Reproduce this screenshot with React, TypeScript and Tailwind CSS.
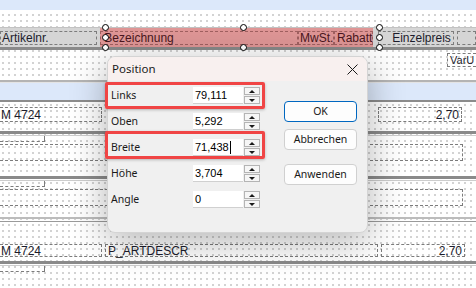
import React from 'react';

const dash = 'border border-dashed border-[#7c7c7c]';

function Spinner() {
  return (
    <div className="ml-px flex h-[17px] w-[16px] flex-col gap-px">
      {['M1 4 L4 1 L7 4 Z', 'M1 1 L4 4 L7 1 Z'].map((d) => (
        <div key={d} className="flex h-[8px] items-center justify-center border border-[#b4b4b4] bg-[#f6f6f6]">
          <svg width="8" height="5" viewBox="0 0 8 5">
            <path d={d} fill="#1a1a1a" />
          </svg>
        </div>
      ))}
    </div>
  );
}

function Field({ label, value, caret }: { label: string; value: string; caret?: boolean }) {
  return (
    <div className="flex h-[17px] items-center">
      <span className="w-[82px] text-[10.5px] text-[#1a1a1a]">{label}</span>
      <div className="flex h-[17px] w-[50px] items-center bg-white pl-[2px] font-['Liberation_Sans'] text-[11px] text-black border-b border-[#d0d0d0]">
        {value}
        {caret && <span className="ml-px inline-block h-[13px] w-[1.5px] bg-black" />}
      </div>
      <Spinner />
    </div>
  );
}

function Handle({ x, y }: { x: number; y: number }) {
  return (
    <div
      className="absolute h-[7px] w-[7px] rounded-full border border-black bg-white"
      style={{ left: x - 3.5, top: y - 3.5 }}
    />
  );
}

function Lines({ dark = 'bg-[#8a8a8a]', light = 'bg-[#cdcdcd]' }: { dark?: string; light?: string }) {
  return (
    <>
      <div className={`h-[3px] ${dark}`} />
      <div className="h-px" />
      <div className={`h-px ${light}`} />
    </>
  );
}

function Section({ after }: { after: number }) {
  return (
    <>
      <div className="h-[6px] w-[45px] border-r border-b border-dashed border-[#7c7c7c]" />
      <div className="h-[2px]" />
      <div className={`h-[17px] w-[463px] ${dash} border-l-0`} />
      <div style={{ height: after }} />
    </>
  );
}

export default function App() {
  return (
    <div className="relative h-[288px] w-[476px] overflow-hidden bg-white bg-[radial-gradient(circle_at_3px_3px,#a4a4a4_0.5px,transparent_0.9px)] bg-size-[6px_6px] font-['Liberation_Sans'] text-[12px] text-[#1c1c2c]">
      <div className="flex flex-col">
        <div className="h-[10px] bg-[#dce8fa]" />
        <div className="h-[17px]" />

        {/* header band */}
        <div className="flex h-[20px] items-center border-t border-[#c2c2c2] bg-[#d5d5d5]">
          <div className={`flex h-[14px] w-[102px] items-center pl-px ${dash}`}>Artikelnr.</div>
          <div className="ml-[3px] flex w-[273px] items-center self-stretch bg-[#df9696] text-[#4a1620]">
            <div className={`flex h-[14px] w-[198px] items-center pl-[3px] ${dash} border-[#a06060]`}>Bezeichnung</div>
            <div className={`flex h-[14px] w-[36px] items-center justify-end ${dash} border-[#a06060]`}>MwSt.</div>
            <div className={`flex h-[14px] w-[39px] items-center justify-end ${dash} border-[#a06060]`}>Rabatt</div>
          </div>
          <div className={`ml-[5px] flex h-[14px] w-[79px] items-center justify-end pr-[2px] ${dash}`}>Einzelpreis</div>
          <div className={`ml-[3px] h-[14px] w-[20px] ${dash}`} />
        </div>
        <div className="h-[3px] bg-[#8a8a8a]" />

        <div className="h-[30px] pl-[447px] pt-[3px]">
          <div className={`flex h-[14px] w-[29px] items-center pl-[2px] text-[11px] ${dash} border-r-0`}>VarU</div>
        </div>
        <div className="h-[2px] bg-[#b4b4b4]" />
        <div className="h-px bg-[#e4e4e4]" />
        <div className="h-[17px] bg-[#dce8fa]" />
        <div className="h-[2px] bg-[#8c8c8c]" />

        <div className="flex h-[26px] items-start pt-[5px]">
          <div className={`flex h-[15px] w-[102px] items-center pl-px ${dash} border-l-0`}>M 4724</div>
          <div className={`ml-[276px] flex h-[15px] w-[84px] items-center justify-end pr-[2px] ${dash}`}>2,70</div>
        </div>

        <div className="h-[3px]" />
        <Lines />
        <Section after={15} />
        <Lines />
        <Section after={11} />
        <div className="h-[2px] bg-[#bcbcbc]" />
        <div className="h-[2px]" />
        <div className="h-px bg-[#9a9a9a]" />

        <div className="h-[22px]" />
        <div className="flex h-[13px] items-center">
          <div className={`flex h-[13px] w-[102px] items-center pl-px ${dash} border-l-0`}>M 4724</div>
          <div className={`ml-[3px] flex h-[13px] w-[273px] items-center pl-[2px] ${dash}`}>P_ARTDESCR</div>
          <div className={`ml-[3px] flex h-[13px] w-[84px] items-center justify-end pr-[2px] ${dash}`}>2,70</div>
        </div>
        <div className="h-[4px]" />
        <Lines />
        <div className="h-[6px] w-[45px] border-r border-b border-dashed border-[#7c7c7c]" />
      </div>

      {/* selection handles */}
      <Handle x={105} y={27} />
      <Handle x={105} y={37} />
      <Handle x={105} y={47} />
      <Handle x={243} y={27} />
      <Handle x={243} y={47} />
      <Handle x={379} y={27} />
      <Handle x={379} y={37} />
      <Handle x={379} y={47} />

      {/* dialog */}
      <div className="absolute left-[107px] top-[56px] h-[177px] w-[261px] overflow-hidden rounded-[8px] border border-[#d4d4d4] bg-[#f0f0f0] font-['Noto_Sans'] text-[#1a1a1a] shadow-[0_8px_36px_rgba(0,0,0,0.3)]">
        <div className="flex h-[24px] items-center justify-between bg-[#f8f0ef] pl-[4px] pr-[9px]">
          <span className="text-[11.5px]">Position</span>
          <svg width="11" height="11" viewBox="0 0 11 11">
            <path d="M0.5 0.5 L10.5 10.5 M10.5 0.5 L0.5 10.5" stroke="#1a1a1a" strokeWidth="1" />
          </svg>
        </div>
        <div className="flex">
          <div className="flex flex-col gap-[9px] pl-[3px] pt-[6px]">
            <Field label="Links" value="79,111" />
            <Field label="Oben" value="5,292" />
            <Field label="Breite" value="71,438" caret />
            <Field label="Höhe" value="3,704" />
            <Field label="Angle" value="0" />
          </div>
          <div className="ml-[24px] flex flex-col pt-[20px] text-[10.5px]">
            <button className="h-[21px] w-[73px] rounded-[4px] border border-[#0067c0] bg-[#fdfdfd]">OK</button>
            <button className="mt-[7px] h-[21px] w-[73px] rounded-[4px] border border-[#d0d0d0] bg-[#fdfdfd]">Abbrechen</button>
            <button className="mt-[14px] h-[21px] w-[73px] rounded-[4px] border border-[#d0d0d0] bg-[#fdfdfd]">Anwenden</button>
          </div>
        </div>
      </div>

      {/* red annotation boxes */}
      <div className="absolute left-[105px] top-[82px] h-[27px] w-[160px] rounded-[2px] border-[3px] border-[#f04545] shadow-[0_1px_3px_rgba(0,0,0,0.25)]" />
      <div className="absolute left-[105px] top-[131px] h-[28px] w-[160px] rounded-[2px] border-[3px] border-[#f04545] shadow-[0_1px_3px_rgba(0,0,0,0.25)]" />
    </div>
  );
}
